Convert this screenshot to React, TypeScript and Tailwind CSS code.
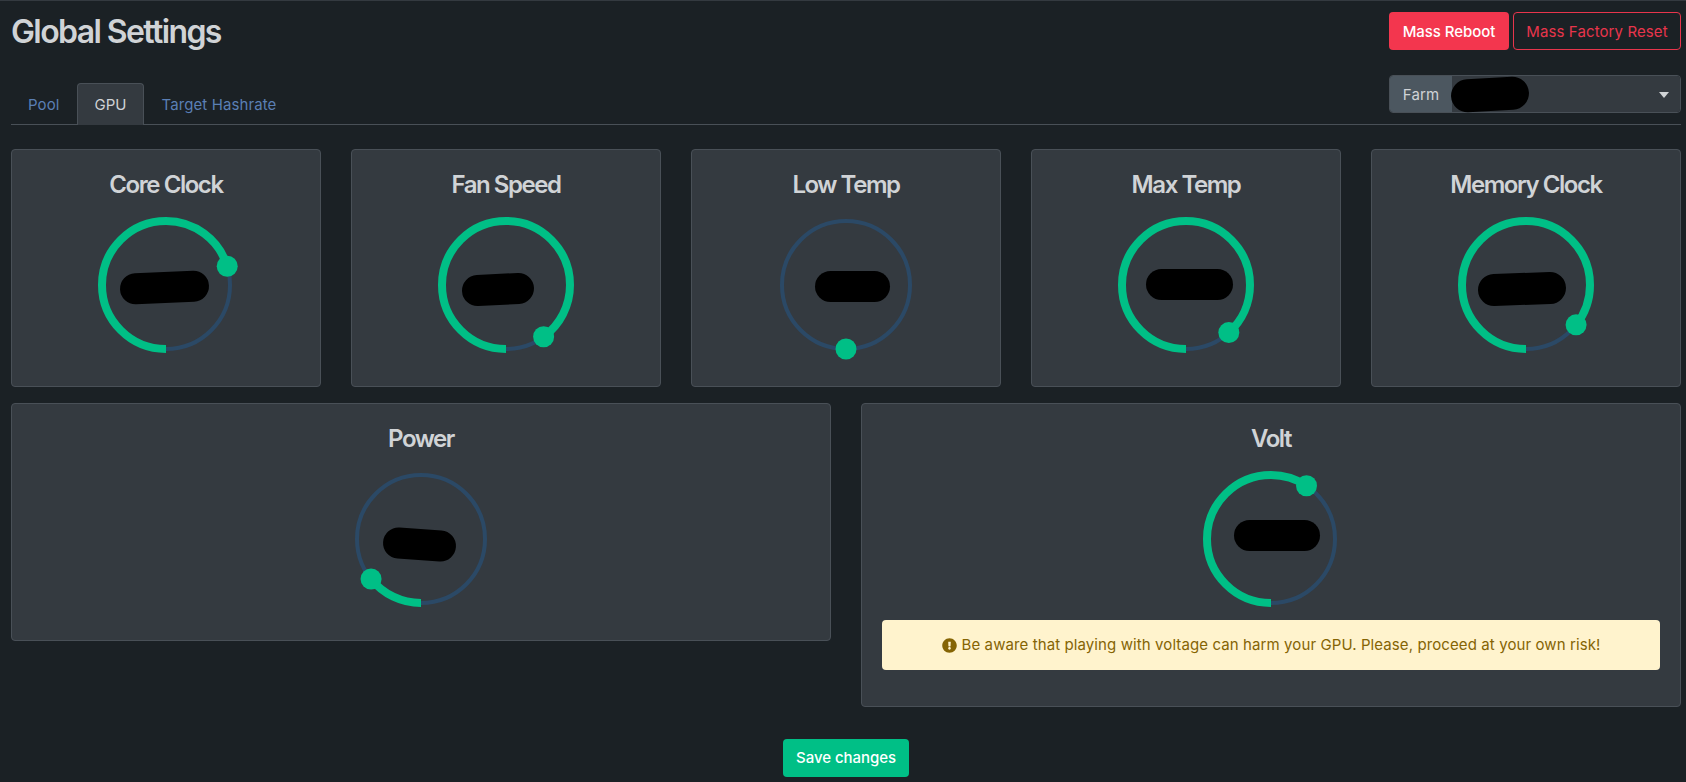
import { FaExclamationCircle } from 'react-icons/fa';

const topGauges = [
  { title: 'Core Clock', angle: 253, blot: { x: -2, y: 2, w: 89, h: 31, rot: -2.5 } },
  { title: 'Fan Speed', angle: 324, blot: { x: -8, y: 4, w: 72, h: 31, rot: -3 } },
  { title: 'Low Temp', angle: 0, blot: { x: 6, y: 1, w: 75, h: 31, rot: 0 } },
  { title: 'Max Temp', angle: 318, blot: { x: 3, y: -1, w: 87, h: 31, rot: 0 } },
  { title: 'Memory Clock', angle: 308.5, blot: { x: -4, y: 3.5, w: 88, h: 32, rot: -2 } },
];

type Blot = { x: number; y: number; w: number; h: number; rot: number };

function Gauge({ angle, blot }: { angle: number; blot: Blot }) {
  const r = 64;
  const rad = (angle * Math.PI) / 180;
  const hx = 75 - r * Math.sin(rad);
  const hy = 75 + r * Math.cos(rad);

  return (
    <div className="relative mx-auto h-[150px] w-[150px]">
      <svg width="150" height="150" viewBox="0 0 150 150" className="block">
        <circle cx="75" cy="75" r={r} fill="none" stroke="#2b4966" strokeWidth="4" />
        <circle
          cx="75"
          cy="75"
          r={r}
          fill="none"
          stroke="#00bf86"
          strokeWidth="8"
          pathLength={360}
          strokeDasharray={`${angle} 360`}
          transform="rotate(90 75 75)"
        />
        <circle cx={hx} cy={hy} r="10.5" fill="#00bf86" />
      </svg>
      <div
        className="absolute rounded-full bg-black"
        style={{
          width: blot.w,
          height: blot.h,
          left: 75 + blot.x - blot.w / 2,
          top: 75 + blot.y - blot.h / 2,
          transform: `rotate(${blot.rot}deg)`,
        }}
      />
    </div>
  );
}

function CardTitle({ children }: { children: string }) {
  return <h4 className="text-center text-[24px] leading-[29px] font-semibold tracking-[-1.45px] text-[#d0d3d6]">{children}</h4>;
}

export default function App() {
  return (
    <div className="min-h-[782px] border-t border-[#343a40] bg-[#1b2125] pr-[5px] pl-[11px] font-['Inter',sans-serif] text-[16px] text-[#d0d3d6]">
      <div className="flex items-start justify-between pt-[11px]">
        <h2 className="mt-[1px] text-[32px] leading-[38px] font-semibold tracking-[-1.6px] text-[#d0d3d6]">Global Settings</h2>
        <div className="flex gap-[4px]">
          <button className="h-[38px] w-[120px] rounded-[4px] bg-[#f3364e] pt-[2px] text-[15px] font-medium tracking-[-0.05px] text-white">Mass Reboot</button>
          <button className="h-[38px] w-[168px] rounded-[4px] border border-[#e8354c] pt-[2px] text-[15px] tracking-[0.1px] text-[#e8354c]">Mass Factory Reset</button>
        </div>
      </div>

      <div className="relative mt-[24px] flex h-[50px] items-end border-b border-[#495057]">
        <a className="pr-[17px] pb-[9px] pl-[17px] text-[15px] leading-[20px] tracking-[0.1px] text-[#5a7fb4]">Pool</a>
        <a className="mb-[-1px] rounded-t-[4px] border border-b-0 border-[#495057] bg-[#343a40] px-[17px] pt-[11px] pb-[10px] text-[15px] leading-[20px] text-[#d0d3d6]">GPU</a>
        <a className="px-[17px] pb-[9px] text-[15px] leading-[20px] tracking-[0.1px] text-[#5a7fb4]">Target Hashrate</a>
        <div className="absolute top-0 right-0 flex h-[38px] w-[292px] overflow-hidden rounded-[4px] border border-[#495057]">
          <span className="flex w-[62px] items-center justify-center bg-[#4c5760] pt-[2px] text-[15px] tracking-[0.1px] text-[#d0d3d6]">Farm</span>
          <span className="relative flex-1 bg-[#343a40]">
            <svg width="10" height="6" viewBox="0 0 10 6" className="absolute top-[16px] right-[11px]">
              <path d="M0 0h10L5 6z" fill="#d0d3d6" />
            </svg>
          </span>
        </div>
        <div className="absolute top-[3px] left-[1440px] h-[33px] w-[78px] -rotate-3 rounded-full bg-black" />
      </div>

      <div className="mt-[24px] grid grid-cols-5 gap-x-[30px]">
        {topGauges.map((g) => (
          <div key={g.title} className="h-[238px] rounded-[4px] border border-[#495057] bg-[#343a40] pt-[20px]">
            <CardTitle>{g.title}</CardTitle>
            <div className="mt-[11px]">
              <Gauge angle={g.angle} blot={g.blot} />
            </div>
          </div>
        ))}
      </div>

      <div className="mt-[16px] grid grid-cols-2 items-start gap-x-[30px]">
        <div className="h-[238px] rounded-[4px] border border-[#495057] bg-[#343a40] pt-[20px]">
          <CardTitle>Power</CardTitle>
          <div className="mt-[11px]">
            <Gauge angle={51.3} blot={{ x: -2, y: 5.5, w: 73, h: 31, rot: 4 }} />
          </div>
        </div>
        <div className="h-[304px] rounded-[4px] border border-[#495057] bg-[#343a40] px-[20px] pt-[20px]">
          <CardTitle>Volt</CardTitle>
          <div className="mt-[11px]">
            <Gauge angle={213.7} blot={{ x: 6, y: -3.5, w: 86, h: 31, rot: 0 }} />
          </div>
          <div className="mt-[6px] flex h-[50px] items-center justify-center gap-[5px] rounded-[4px] bg-[#fff3cd] text-[15px] tracking-[0.1px] text-[#856404]">
            <FaExclamationCircle className="h-[15px] w-[15px]" />
            <span>Be aware that playing with voltage can harm your GPU. Please, proceed at your own risk!</span>
          </div>
        </div>
      </div>

      <div className="mt-[32px] flex justify-center">
        <button className="h-[38px] w-[126px] rounded-[4px] bg-[#00bf86] pt-px text-[15px] font-medium tracking-[-0.05px] text-white">Save changes</button>
      </div>
    </div>
  );
}
